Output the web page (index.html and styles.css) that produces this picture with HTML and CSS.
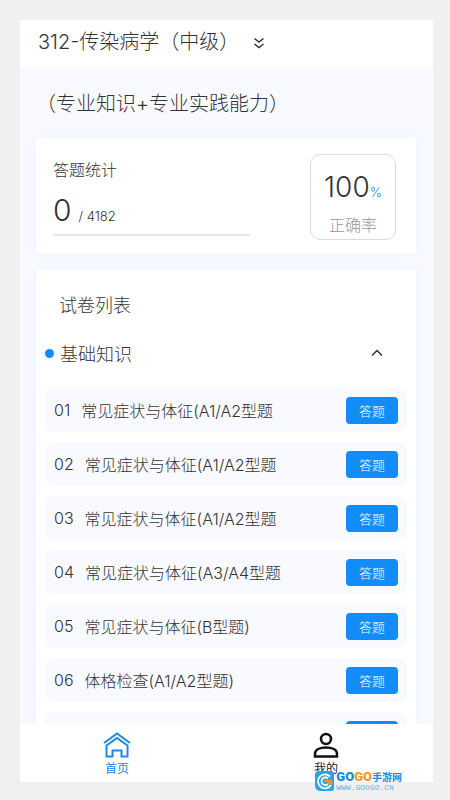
FILE: index.html
```html
<!DOCTYPE html>
<html lang="zh-CN">
<head>
<meta charset="utf-8">
<meta name="viewport" content="width=device-width, initial-scale=1">
<title>312-传染病学（中级）</title>
<link rel="stylesheet" href="styles.css">
</head>
<body>
<div class="phone">
  <header class="topbar">
    <h1 class="topbar-title">312-传染病学（中级）</h1>
    <button class="icon-button" type="button" aria-label="切换科目">
      <svg width="12" height="14" viewBox="0 0 12 14" fill="none" stroke="#333" stroke-width="1.5"><path d="M1.500 3.500 6 7l4.500-3.500M1.500 9 6 12.500l4.500-3.500"/></svg>
    </button>
  </header>
  <main class="content">
    <h2 class="subtitle">（专业知识+专业实践能力）</h2>
    <section class="card stats">
      <div class="stats-main">
        <h3 class="stats-label">答题统计</h3>
        <p class="stats-count"><span class="stats-done">0</span><span class="stats-total">/ 4182</span></p>
      </div>
      <div class="rate">
        <p class="rate-value">100<span class="rate-unit">%</span></p>
        <p class="rate-label">正确率</p>
      </div>
    </section>
    <section class="card papers">
      <h3 class="papers-title">试卷列表</h3>
      <div class="group">
        <span class="dot"></span>
        <h4 class="group-name">基础知识</h4>
        <button class="icon-button" type="button" aria-label="收起">
          <svg width="14" height="10" viewBox="0 0 14 10" fill="none" stroke="#333" stroke-width="1.5"><path d="M2 7.500 7 2.500l5 5"/></svg>
        </button>
      </div>
      <ul class="list">
        <li class="row"><span class="row-num">01</span><span class="row-name">常见症状与体征(A1/A2型题</span><button class="answer" type="button">答题</button></li>
        <li class="row"><span class="row-num">02</span><span class="row-name">常见症状与体征(A1/A2型题</span><button class="answer" type="button">答题</button></li>
        <li class="row"><span class="row-num">03</span><span class="row-name">常见症状与体征(A1/A2型题</span><button class="answer" type="button">答题</button></li>
        <li class="row"><span class="row-num">04</span><span class="row-name">常见症状与体征(A3/A4型题</span><button class="answer" type="button">答题</button></li>
        <li class="row"><span class="row-num">05</span><span class="row-name">常见症状与体征(B型题)</span><button class="answer" type="button">答题</button></li>
        <li class="row"><span class="row-num">06</span><span class="row-name">体格检查(A1/A2型题)</span><button class="answer" type="button">答题</button></li>
        <li class="row"><button class="answer" type="button" aria-label="答题"></button></li>
      </ul>
    </section>
  </main>
  <nav class="tabbar">
    <a class="tab tab-active" href="#home">
      <svg width="28" height="26" viewBox="0 0 28 26" fill="none" stroke="#1f87e5" stroke-width="2"><path d="M1 11 14 1.500 27 11"/><path d="M3.500 13.500V24.500H9.500V18.500H18.500V24.500H24.500V13.500L14 6Z"/></svg>
      <span>首页</span>
    </a>
    <a class="tab" href="#mine">
      <svg width="26" height="26" viewBox="0 0 26 26" fill="none" stroke="#111" stroke-width="2.500"><circle cx="13" cy="7" r="5"/><path d="M2 24.500V21.500C2 17.500 7 15.500 13 15.500S24 17.500 24 21.500V24.500Z"/></svg>
      <span>我的</span>
    </a>
  </nav>
</div>
<div class="watermark">
  <svg width="22" height="22" viewBox="0 0 22 22"><path d="M6 1H17Q20 1 20 4V18Q20 21 17 21H7Q1 21 1 15V5Q1 1 6 1Z" fill="#2ba3e6"/><path d="M16 6.500A7 7 0 1 0 17 15" fill="none" stroke="#fff" stroke-width="1.800"/><path d="M14 8.500A3.800 3.800 0 1 0 14 14" fill="none" stroke="#fff" stroke-width="1.800"/><path d="M10 10h8v5l-2-1.500-2 1.500-1-3h-3Z" fill="#f7981d"/></svg>
  <div class="wm-text">
    <p class="wm-name"><span class="wm-go">GO</span><span class="wm-go wm-orange">GO</span><span class="wm-cn">手游网</span></p>
    <p class="wm-url">WWW.GOOGO.CN</p>
  </div>
</div>
</body>
</html>
```
FILE: styles.css
```css
* {
  box-sizing: border-box;
}

body,
h1,
h2,
h3,
h4,
p,
ul {
  margin: 0;
  padding: 0;
  font-weight: 300;
}

body {
  height: 100vh;
  padding: 20px 17px 18px 20px;
  background: #f0f0f0;
  color: #333;
  font-family: Inter, "Noto Sans CJK SC", sans-serif;
  overflow: hidden;
}

button {
  border: 0;
  padding: 0;
  font: inherit;
}

.phone {
  display: flex;
  flex-direction: column;
  height: 100%;
  background: #fff;
}

.topbar {
  display: flex;
  align-items: center;
  gap: 14px;
  height: 48px;
  padding: 0 18px 4px;
  flex: none;
}

.topbar-title,
.subtitle {
  font-size: 20px;
  line-height: 28px;
}

.icon-button {
  display: flex;
  background: none;
}

.content {
  flex: 1;
  min-height: 0;
  padding: 22px 17px 0 16px;
  background: #f9faff;
  overflow: hidden;
}

.subtitle {
  margin-bottom: 20px;
}

.card {
  background: #fff;
  box-shadow: 0 0 12px #eaf2ff;
}

.stats {
  display: flex;
  gap: 60px;
  height: 115px;
  padding: 16px 20px 13px 17px;
  margin-bottom: 17px;
}

.stats-main {
  flex: 1;
  height: 82px;
  border-bottom: 2px solid #e6e6e6;
}

.stats-label {
  font-size: 16px;
  line-height: 32px;
}

.stats-count {
  line-height: 48px;
}

.stats-done {
  font-size: 30px;
}

.stats-total {
  margin-left: 7px;
  font-size: 13px;
}

.rate {
  width: 86px;
  height: 86px;
  padding-top: 12px;
  border: 1px solid #dcdcdc;
  border-radius: 10px;
  text-align: center;
}

.rate-value {
  font-size: 28px;
  line-height: 40px;
}

.rate-unit {
  color: #1f87e5;
  font-size: 13px;
}

.rate-label {
  color: #999;
  font-size: 16px;
  line-height: 26px;
}

.papers {
  padding: 20px 9px 0;
}

.papers-title {
  padding-left: 14px;
  font-size: 18px;
  line-height: 32px;
}

.group {
  display: flex;
  align-items: center;
  gap: 6px;
  height: 62px;
  margin-bottom: 4px;
  padding-right: 23px;
}

.dot {
  width: 9px;
  height: 9px;
  border-radius: 50%;
  background: #128cf8;
}

.group-name {
  flex: 1;
  font-size: 18px;
}

.list {
  display: grid;
  gap: 10px;
  list-style: none;
}

.row {
  display: flex;
  align-items: center;
  gap: 11px;
  height: 44px;
  padding: 0 9px;
  border-radius: 8px;
  background: #f9faff;
  font-size: 16px;
}

.answer {
  width: 52px;
  height: 27px;
  margin-left: auto;
  border-radius: 4px;
  background: #128cf8;
  color: #fff;
  font-size: 13px;
}

.tabbar {
  display: flex;
  justify-content: space-between;
  flex: none;
  height: 58px;
  padding: 8px 93px 0 83px;
}

.tab {
  display: flex;
  flex-direction: column;
  align-items: center;
  width: 28px;
  gap: 2px;
  color: #222;
  font-size: 12px;
  font-weight: 400;
  line-height: 18px;
  text-decoration: none;
}

.tab-active {
  color: #1f87e5;
}

.watermark {
  position: absolute;
  right: 48px;
  bottom: 8px;
  display: flex;
  align-items: center;
}

.wm-name {
  display: flex;
  line-height: 14px;
}

.wm-go {
  color: #148be0;
  font-family: Roboto, sans-serif;
  font-size: 13px;
  font-weight: 900;
}

.wm-orange {
  color: #f79a1c;
}

.wm-cn {
  color: #148be0;
  font-size: 10px;
  font-weight: 700;
}

.wm-url {
  color: #6fb0dc;
  font-family: "Liberation Mono", monospace;
  font-size: 8px;
  line-height: 8px;
}
```
